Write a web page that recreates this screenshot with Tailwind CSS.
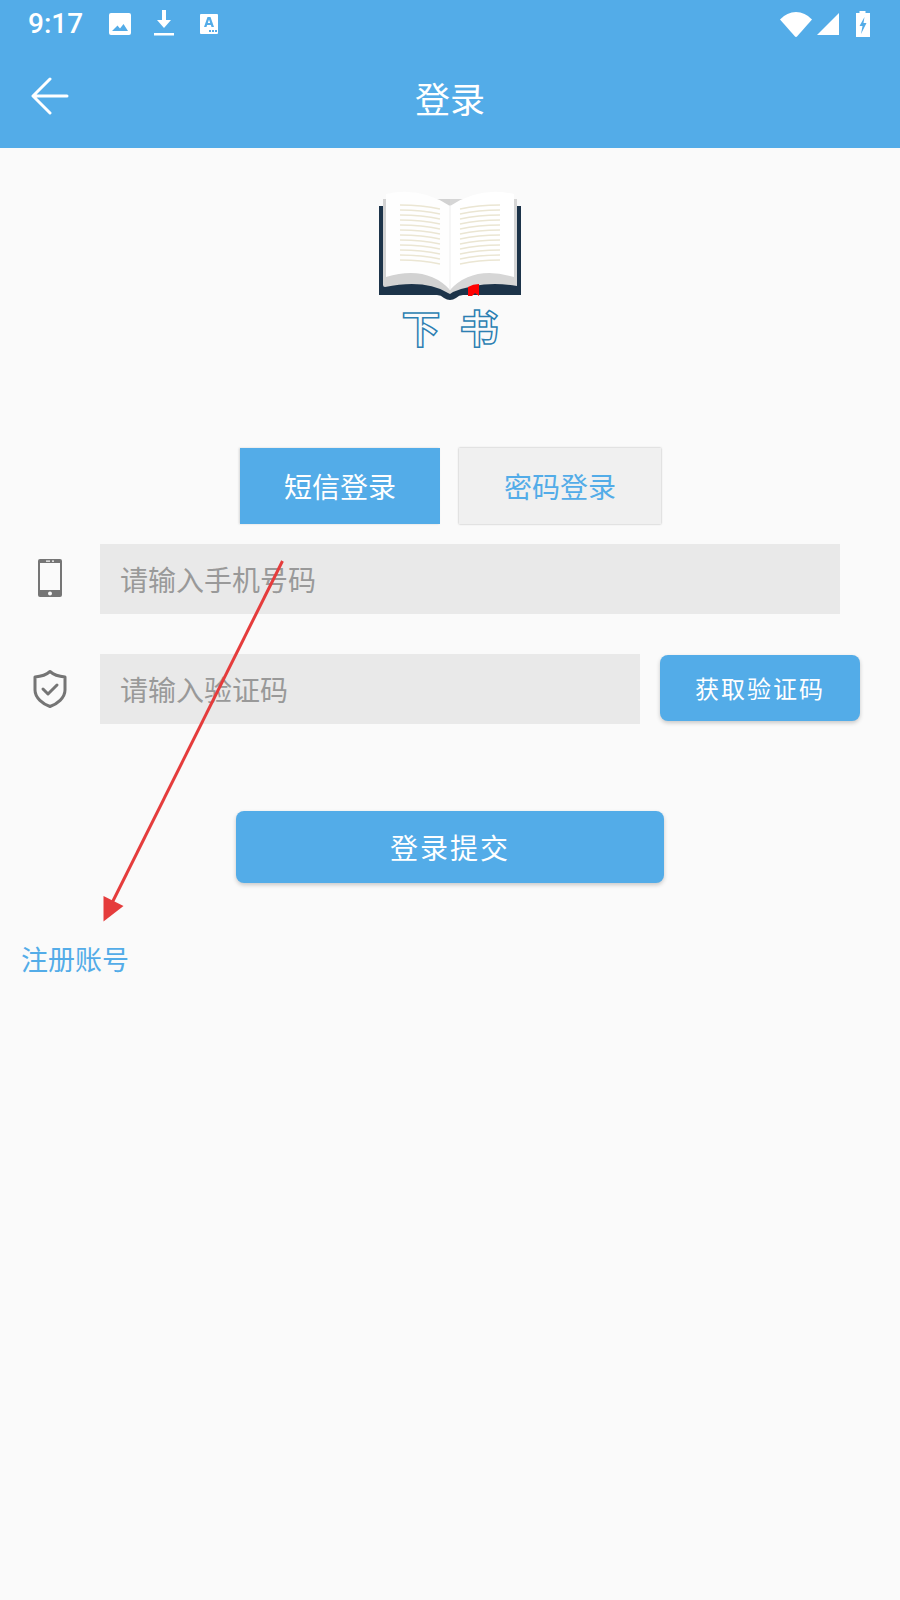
<!DOCTYPE html>
<html lang="zh-CN">
<head>
<meta charset="utf-8">
<script src="https://cdn.jsdelivr.net/npm/@tailwindcss/browser@4"></script>
<title>登录</title>
</head>
<body class="m-0 bg-[#fafafa]">
<div class="relative w-[900px] h-[1600px] overflow-hidden bg-[#fafafa] font-['Noto_Sans_CJK_SC','Noto_Sans',sans-serif]">

  <header class="h-[148px] bg-[#53ace8] text-white flex flex-col">
    <div class="h-[48px] flex items-center justify-between pl-[28px] pr-[30px]">
      <div class="flex items-center">
        <span class="font-['Roboto',sans-serif] font-medium text-[28px] leading-[48px] w-[80px]">9:17</span>
        <svg class="w-[24px] h-[24px] ml-0 mr-[21px]" viewBox="0 0 24 24"><path fill="#fff" fill-rule="evenodd" d="M3 1h18a2 2 0 0 1 2 2v18a2 2 0 0 1-2 2H3a2 2 0 0 1-2-2V3a2 2 0 0 1 2-2zM4 19h16l-4.5-7-3.5 4.5-2.5-3z"/></svg>
        <svg class="w-[22px] h-[28px] mr-[24px]" viewBox="0 0 22 28"><path fill="#fff" d="M9 0h4v10h5l-7 8-7-8h5zM1 23h20v2.500H1z"/></svg>
        <svg class="w-[20px] h-[22px]" viewBox="0 0 20 22"><path fill="#fff" fill-rule="evenodd" d="M2 1h16a1 1 0 0 1 1 1v18a1 1 0 0 1-1 1H2a1 1 0 0 1-1-1V2a1 1 0 0 1 1-1zM8.500 4 5 14h2.500l.6-2h3.800l.6 2H15L11.500 4zM10 6.500 11.200 10H8.800zM10 17h2v2h-2zM13 17h2v2h-2zM16 17h2v2h-2z"/></svg>
      </div>
      <div class="flex items-center">
        <svg class="w-[32px] h-[25px] mr-[5px]" viewBox="0 0 32 25"><path fill="#fff" d="M0 7.500Q7 0 16 0t16 7.500L17 24.500a1.400 1.400 0 0 1-2 0z"/></svg>
        <svg class="w-[23px] h-[22px] mr-[15px]" viewBox="0 0 23 22"><path fill="#fff" d="M22 0v22H0z"/></svg>
        <svg class="w-[15px] h-[26px]" viewBox="0 0 15 26"><path fill="#fff" fill-rule="evenodd" d="M4.500 0h6v2H15v24H1V2h3.500zM9.500 6 4.500 15h3L6 23l5.500-11h-3z"/></svg>
      </div>
    </div>
    <div class="relative h-[100px] flex items-center justify-center">
      <svg class="absolute left-[31px] top-[29px] w-[38px] h-[38px]" viewBox="0 0 38 38" fill="none" stroke="#fff" stroke-width="3" stroke-linecap="round" stroke-linejoin="round"><path d="M36 19H3M19 2 2 19l17 17"/></svg>
      <span class="text-[35px] leading-[50px] tracking-[0px]">登录</span>
    </div>
  </header>

  <section class="h-[300px] flex flex-col items-center">
    <svg class="mt-[39px] w-[146px] h-[115px]" viewBox="0 0 146 115">
      <path fill="#1c3349" d="M2 19h142v89H86q-4 0-7 3-6 4-12 0-3-3-7-3H2z"/>
      <path fill="#d2d2d2" d="M6 12h67v95l-2-1Q48 92 8 100q-2 0-2-2z"/>
      <path fill="#d6d6d6" d="M140 12H73v95l3-2q30-12 64-6z"/>
      <path fill="#fefefe" d="M9 7q34-8 64 12v84Q50 78 9 90z"/>
      <path fill="#ffffff" d="M137 7q-34-8-64 12v84q23-25 64-13z"/>
      <path fill="#eeeeee" d="M72.500 18h1v85h-1z"/>
      <g fill="none" stroke="#ebe6d3" stroke-width="1.300">
        <path d="M23 18q22 0 40 4M23 23q22 0 40 4M23 28q22 0 40 4M23 33q22 0 40 4M23 38q22 0 40 4M23 43q22 0 40 4M23 48q22 0 40 4M23 53q22 0 40 4M23 58q22 0 40 4M23 63q22 0 40 4M23 68q22 0 40 4M23 73q22 0 40 4"/>
        <path d="M123 18q-22 0-40 4M123 23q-22 0-40 4M123 28q-22 0-40 4M123 33q-22 0-40 4M123 38q-22 0-40 4M123 43q-22 0-40 4M123 48q-22 0-40 4M123 53q-22 0-40 4M123 58q-22 0-40 4M123 63q-22 0-40 4M123 68q-22 0-40 4M123 73q-22 0-40 4"/>
      </g>
      <path fill="#f00" d="M91 100q5-3 11-3v12l-4-3-3 3h-4z"/>
    </svg>
    <div class="mt-[2px] flex gap-[19px] text-[39px] leading-[44px] font-bold text-[#fafafa] [-webkit-text-stroke:1.5px_#2c7fb2]">
      <span>下</span><span>书</span>
    </div>
  </section>

  <div class="h-[76px] flex pl-[240px] gap-[19px] text-[28px]">
    <div class="w-[200px] flex items-center justify-center bg-[#53ace8] text-white shadow-[-1px_0_2px_rgba(0,0,0,0.15)]">短信登录</div>
    <div class="w-[202px] flex items-center justify-center bg-[#f0f0f0] text-[#53ace8] shadow-[0_0_2px_rgba(0,0,0,0.3)]">密码登录</div>
  </div>

  <div class="mt-[20px] h-[70px] flex">
    <div class="w-[100px] flex items-center justify-center pr-[0px]">
      <svg class="w-[24px] h-[38px] mt-[-2px]" viewBox="0 0 24 38"><path fill="#757575" fill-rule="evenodd" d="M2 0h20a2 2 0 0 1 2 2v34a2 2 0 0 1-2 2H2a2 2 0 0 1-2-2V2a2 2 0 0 1 2-2zM2 4v27h20V4zM8 1.500h4v1.200H8zM14 1.500h2v1.200h-2zM12 32.500a2 2 0 1 0 0 4 2 2 0 0 0 0-4z"/></svg>
    </div>
    <div class="w-[740px] bg-[#e9e9e9] flex items-center pl-[20px] text-[28px] text-[#999999]">请输入手机号码</div>
  </div>

  <div class="mt-[40px] h-[70px] flex">
    <div class="w-[100px] flex items-center justify-center">
      <svg class="w-[34px] h-[38px]" viewBox="0 0 34 38" fill="none" stroke="#757575" stroke-width="3" stroke-linejoin="round" stroke-linecap="round"><path d="M17 1.500C13 5 7 6.500 2 7v13c0 8 8 14 15 16.500C24 34 32 28 32 20V7c-5-.5-11-2-15-5.500z"/><path d="M10 19l5 5 9-9"/></svg>
    </div>
    <div class="w-[540px] bg-[#e9e9e9] flex items-center pl-[20px] text-[28px] text-[#999999]">请输入验证码</div>
    <button class="ml-[20px] mt-[1px] w-[200px] h-[66px] rounded-[8px] bg-[#53ace8] text-white text-[24px] tracking-[2px] shadow-[0_2px_4px_rgba(0,0,0,0.2)]">获取验证码</button>
  </div>

  <button class="block mt-[87px] ml-[236px] w-[428px] h-[72px] rounded-[8px] bg-[#53ace8] text-white text-[28px] tracking-[2px] shadow-[0_2px_4px_rgba(0,0,0,0.2)]">登录提交</button>

  <div class="mt-[56px] ml-[21px] text-[27px] leading-[40px] text-[#53ace8]">注册账号</div>

  <svg class="absolute left-0 top-0 w-[900px] h-[1600px] pointer-events-none" viewBox="0 0 900 1600">
    <path d="M282.500 561 112 903" stroke="#e53c3c" stroke-width="3" fill="none"/>
    <path d="M103.500 896 123.500 906 103.500 921.500z" fill="#e53c3c"/>
  </svg>
</div>
</body>
</html>
